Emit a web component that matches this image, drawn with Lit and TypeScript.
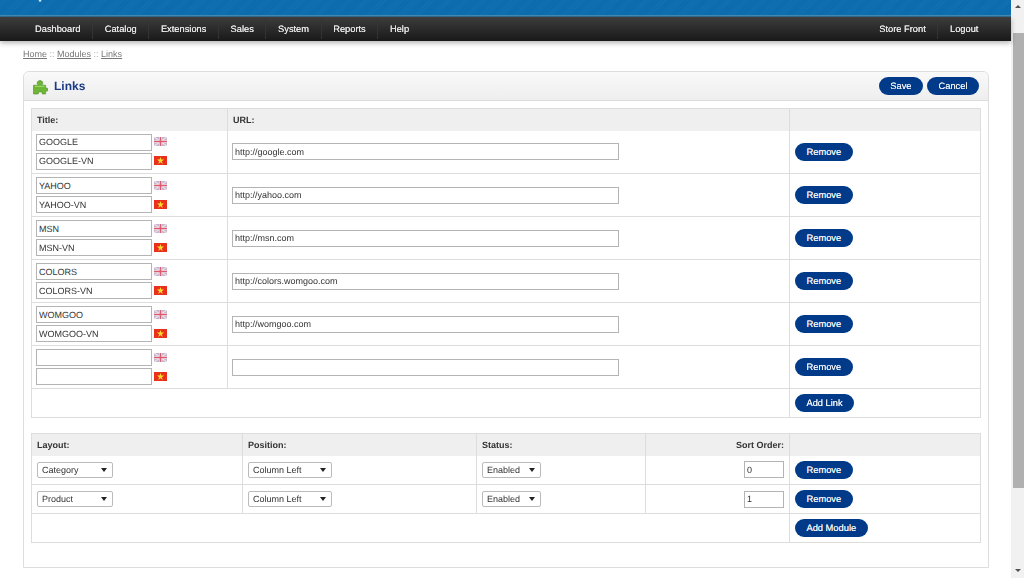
import { LitElement, html, css, svg } from "lit";
import { customElement } from "lit/decorators.js";

const links = [
  ["GOOGLE", "GOOGLE-VN", "http://google.com"],
  ["YAHOO", "YAHOO-VN", "http://yahoo.com"],
  ["MSN", "MSN-VN", "http://msn.com"],
  ["COLORS", "COLORS-VN", "http://colors.womgoo.com"],
  ["WOMGOO", "WOMGOO-VN", "http://womgoo.com"],
  ["", "", ""],
];
const modules = [
  ["Category", "0"],
  ["Product", "1"],
];
const navLeft = ["Dashboard", "Catalog", "Extensions", "Sales", "System", "Reports", "Help"];

const ukFlag = svg`<svg class="flag" viewBox="0 0 13 9" width="13" height="9"><rect width="13" height="9" fill="#c8b4cc"/><path d="M0 0L13 9M13 0L0 9" stroke="#e8dfe8" stroke-width="1.4"/><path d="M6.5 0V9M0 4.5H13" stroke="#eee" stroke-width="3"/><path d="M6.5 0V9M0 4.5H13" stroke="#dc5a72" stroke-width="1.6"/></svg>`;
const vnFlag = svg`<svg class="flag" viewBox="0 0 13 9" width="13" height="9"><rect width="13" height="9" fill="#e8301c"/><path d="M6.5 1L7.4 3.6H10.1L7.9 5.2L8.7 7.9L6.5 6.3L4.3 7.9L5.1 5.2L2.9 3.6H5.6Z" fill="#fbdc2a"/></svg>`;
const puzzle = svg`<svg viewBox="0 0 16 16" width="16" height="16"><path d="M1.5 6.2H5.2C5.8 6.2 5.9 5.6 5.5 5.1C4.6 4 5.5 1.6 8 1.6C10.5 1.6 11.4 4 10.5 5.1C10.1 5.6 10.2 6.2 10.8 6.2H13.6V8.6C13.6 9.2 14.1 9.2 14.5 9C15.3 8.7 16 9.4 16 10.6C16 11.8 15.3 12.4 14.5 12.2C14.1 12 13.6 12 13.6 12.6V15H10.6C10 15 10 14.5 10.2 14C10.4 13.4 9.6 12.9 8.3 12.9C7 12.9 6.2 13.4 6.4 14C6.6 14.5 6.6 15 6 15H1.5Z" fill="#6fb536" stroke="#4f8f2a" stroke-width=".6"/><path d="M3 7.4H12.5" stroke="#a4d86c" stroke-width="1"/></svg>`;

@customElement("app-root")
export class AppRoot extends LitElement {
  static styles = css`
    :host {
      display: flex;
      width: 1024px;
      height: 578px;
      overflow: hidden;
      background: #fff;
      font-family: "Liberation Sans", Arial, sans-serif;
      font-size: 9px;
      color: #333;
      text-rendering: geometricPrecision;
    }
    * { box-sizing: border-box; }
    .main { width: 1011px; flex: none; filter: blur(0.3px); }
    .top {
      position: relative;
      height: 15px;
      overflow: hidden;
      background: repeating-linear-gradient(135deg, #0f71b3 0 1px, #0c6aab 1px 2px);
    }
    .logo {
      position: absolute;
      left: 25px;
      top: -15px;
      font-size: 16.5px;
      line-height: 16px;
      font-weight: bold;
      color: #d7ecf8;
    }
    .rule { height: 2px; background: linear-gradient(#4f9ac8, #2b5f80); }
    nav {
      height: 24px;
      display: flex;
      justify-content: space-between;
      padding: 0 21px 0 22px;
      background: linear-gradient(#3d3d3d, #191919);
      box-shadow: 0 2px 5px rgba(0, 0, 0, 0.3);
    }
    .navgroup { display: flex; align-items: center; }
    .navitem {
      height: 20px;
      line-height: 20px;
      padding: 0 11.6px;
      color: #e8e8e8;
      font-size: 9.3px;
      text-shadow: 0 0 0.5px #e8e8e8;
      border-left: 1px solid #343434;
    }
    .navitem.first { border-left: 0; padding-left: 13px; }
    .crumbs { margin: 8px 0 0 23px; height: 11px; line-height: 11px; color: #aaa; }
    .crumbs a { color: #777; text-decoration: underline; }
    .box {
      margin: 11px 22px 0 23px;
      height: 497px;
      border: 1px solid #ddd;
      border-top-left-radius: 6px;
      border-top-right-radius: 6px;
      padding: 0 7px;
    }
    .heading {
      height: 29px;
      margin: 0 -7px 7px;
      padding: 0 9px 0 8px;
      display: flex;
      align-items: center;
      justify-content: space-between;
      background: linear-gradient(#f9f9f9, #eeeeee);
      border-bottom: 1px solid #ddd;
      border-top-left-radius: 6px;
      border-top-right-radius: 6px;
    }
    .title {
      display: flex;
      align-items: center;
      gap: 6px;
      font-size: 12px;
      font-weight: bold;
      color: #1a3a85;
    }
    .title svg { display: block; margin-top: 2px; }
    .actions { display: flex; gap: 4px; }
    .btn {
      display: inline-block;
      height: 18px;
      line-height: 18px;
      padding: 0 11.5px;
      border-radius: 9px;
      background: #003a88;
      color: #eef1f6;
      font-size: 9.3px;
      text-shadow: 0 0 0.5px #eef1f6;
      white-space: nowrap;
    }
    table {
      width: 950px;
      table-layout: fixed;
      border-collapse: collapse;
      border: 1px solid #ddd;
    }
    .second { margin-top: 15px; }
    th, td { border-right: 1px solid #ddd; border-bottom: 1px solid #ddd; padding: 0 5px; }
    th {
      background: #efefef;
      text-align: left;
      font-weight: bold;
      color: #333;
      height: 22px;
      border-bottom: 0;
    }
    .r { text-align: right; }
    .links td { height: 43px; }
    .links .foot td { height: 29px; }
    .mods td { height: 29px; }
    .links td.names { padding: 0 3px 0 4px; }
    .line { display: flex; align-items: center; gap: 2px; height: 17px; }
    .line + .line { margin-top: 2px; }
    .flag { display: block; margin-top: -1px; flex: none; }
    .links td.urlcell { padding: 0 0 0 4px; }
    input, select {
      font-family: "Liberation Sans", Arial, sans-serif;
      font-size: 9px;
      color: #333;
      text-rendering: geometricPrecision;
    }
    input {
      display: block;
      height: 17px;
      padding: 0 2px;
      border: 1px solid #b4b4b4;
      border-radius: 0;
      background: #fff;
      outline: none;
    }
    .name { width: 116px; }
    .url { width: 387px; }
    .sort { width: 40px; height: 17px; margin-left: auto; }
    .sel { position: relative; width: 76px; height: 16px; }
    .sel.pos { width: 84px; }
    .sel.stat { width: 59px; }
    .sel::after {
      content: "";
      position: absolute;
      right: 6px;
      top: 6px;
      border-left: 3px solid transparent;
      border-right: 3px solid transparent;
      border-top: 4px solid #222;
      pointer-events: none;
    }
    select {
      appearance: none;
      -webkit-appearance: none;
      display: block;
      height: 16px;
      width: 100%;
      padding: 0 0 0 4px;
      border: 1px solid #bbb;
      border-radius: 2px;
      background: #fff;
    }
    .bar {
      width: 13px;
      flex: none;
      height: 578px;
      background: #f1f1f1;
      display: flex;
      flex-direction: column;
      align-items: center;
    }
    .up, .down { width: 0; height: 0; border-left: 3px solid transparent; border-right: 3px solid transparent; }
    .up { margin-top: 5px; border-bottom: 3px solid #505050; }
    .thumb { margin: 25px 0 0 2px; width: 11px; height: 455px; background: #b0b0b0; }
    .down { margin-top: 81px; border-top: 3px solid #505050; }
  `;

  render() {
    return html`
      <div class="main">
        <div class="top"><span class="logo">OpenCart</span></div>
        <div class="rule"></div>
        <nav>
          <div class="navgroup">
            ${navLeft.map((n, i) => html`<div class="navitem ${i === 0 ? "first" : ""}">${n}</div>`)}
          </div>
          <div class="navgroup">
            <div class="navitem first">Store Front</div>
            <div class="navitem">Logout</div>
          </div>
        </nav>
        <div class="crumbs"><a>Home</a> :: <a>Modules</a> :: <a>Links</a></div>
        <div class="box">
          <div class="heading">
            <div class="title">${puzzle}<span>Links</span></div>
            <div class="actions"><span class="btn">Save</span><span class="btn">Cancel</span></div>
          </div>
          <table class="links">
            <colgroup><col style="width:196px" /><col style="width:562px" /><col /></colgroup>
            <thead><tr><th>Title:</th><th>URL:</th><th></th></tr></thead>
            <tbody>
              ${links.map(
                (l) => html`<tr>
                  <td class="names">
                    <div class="line"><input class="name" .value=${l[0]} />${ukFlag}</div>
                    <div class="line"><input class="name" .value=${l[1]} />${vnFlag}</div>
                  </td>
                  <td class="urlcell"><input class="url" .value=${l[2]} /></td>
                  <td><span class="btn">Remove</span></td>
                </tr>`
              )}
              <tr class="foot"><td colspan="2"></td><td><span class="btn">Add Link</span></td></tr>
            </tbody>
          </table>
          <table class="mods second">
            <colgroup>
              <col style="width:211px" /><col style="width:234px" /><col style="width:169px" /><col style="width:144px" /><col />
            </colgroup>
            <thead><tr><th>Layout:</th><th>Position:</th><th>Status:</th><th class="r">Sort Order:</th><th></th></tr></thead>
            <tbody>
              ${modules.map(
                (m) => html`<tr>
                  <td><div class="sel"><select><option>${m[0]}</option></select></div></td>
                  <td><div class="sel pos"><select><option>Column Left</option></select></div></td>
                  <td><div class="sel stat"><select><option>Enabled</option></select></div></td>
                  <td><input class="sort" .value=${m[1]} /></td>
                  <td><span class="btn">Remove</span></td>
                </tr>`
              )}
              <tr class="foot"><td colspan="4"></td><td><span class="btn">Add Module</span></td></tr>
            </tbody>
          </table>
        </div>
      </div>
      <div class="bar">
        <div class="up"></div>
        <div class="thumb"></div>
        <div class="down"></div>
      </div>
    `;
  }
}
